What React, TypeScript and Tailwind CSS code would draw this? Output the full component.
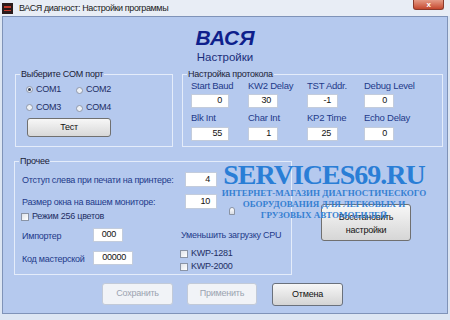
import type { ReactNode } from "react";

function Radio({ checked = false, label }: { checked?: boolean; label: string }) {
    return (
        <div className="flex items-center gap-[3px]">
            <span className="flex h-[7px] w-[7px] items-center justify-center rounded-full border border-[#8f98aa] bg-[#eef1f6]">
                {checked && <span className="h-[3px] w-[3px] rounded-full bg-[#2f3b55]" />}
            </span>
            <span className="text-[#1e2e64]">{label}</span>
        </div>
    );
}

function Check({ label }: { label: string }) {
    return (
        <div className="flex items-center gap-[3px]">
            <span className="h-[8px] w-[8px] border border-[#8a94a6] bg-gradient-to-br from-[#dfe3ea] to-white" />
            <span className="text-[#1e2e64]">{label}</span>
        </div>
    );
}

function Field({ value, w, h = "h-[14px]" }: { value: string; w: string; h?: string }) {
    return (
        <div className={`${w} ${h} flex items-center justify-end border border-[#c3ccdc] bg-white pr-[6px] text-[#111]`}>
            {value}
        </div>
    );
}

function Group({ title, className, children }: { title: string; className: string; children: ReactNode }) {
    return (
        <fieldset className={`box-border border border-[#e4ecfa] ${className}`}>
            <legend className="ml-[4px] px-[1px] leading-[12px] text-[#1b2236]">{title}</legend>
            {children}
        </fieldset>
    );
}

const protocol = [
    ["Start Baud", "0", "w-[38px]"],
    ["KW2 Delay", "30", "w-[30px]"],
    ["TST Addr.", "-1", "w-[31px]"],
    ["Debug Level", "0", "w-[30px]"],
];
const protocol2 = [
    ["Blk Int", "55", "w-[38px]"],
    ["Char Int", "1", "w-[30px]"],
    ["KP2 Time", "25", "w-[31px]"],
    ["Echo Delay", "0", "w-[30px]"],
];

export default function App() {
    return (
        <div className="relative flex h-[320px] w-[450px] flex-col overflow-hidden whitespace-nowrap bg-[#dde6f3] font-['Liberation_Sans',Arial,sans-serif] text-[9px] tracking-[-0.25px]">
            {/* title bar */}
            <div className="flex h-[16px] items-start bg-[#e8edf5]">
                <div className="ml-[2px] mt-[3px] flex h-[11px] w-[11px] items-center justify-center bg-[#2a1a1a]">
                    <div className="h-[5px] w-[7px] border-t-2 border-b border-[#c0392b]" />
                </div>
                <span className="ml-[6px] mt-[2px] text-[9px] leading-[12px] tracking-[-0.4px] text-[#1a1a1a]">ВАСЯ диагност: Настройки программы</span>
                <div className="ml-auto mr-[6px] flex h-[10px] w-[31px] items-center justify-center rounded-b-[3px] border border-t-0 border-[#8a3a2c] bg-gradient-to-b from-[#e49a86] to-[#c4462d] text-[8px] font-bold leading-none text-white">
                    x
                </div>
            </div>

            {/* client area */}
            <div className="mx-[2px] flex h-[298px] flex-col border border-[#7f93b8] bg-[#b5c9ee]">
                <div className="pt-[9px] text-center tracking-normal">
                    <div className="text-[21px] font-bold italic leading-[24px] text-[#0e1f8c]">ВАСЯ</div>
                    <div className="text-[11.5px] leading-[14px] text-[#1a2d7a]">Настройки</div>
                </div>

                <div className="mt-[4px] flex">
                    <Group title="Выберите COM порт" className="ml-[12px] h-[79px] w-[158px]">
                        <div className="pl-[10px] pt-[3px]">
                            <div className="flex h-[14px]">
                                <div className="w-[50px]"><Radio checked label="COM1" /></div>
                                <Radio label="COM2" />
                            </div>
                            <div className="mt-[4px] flex h-[14px]">
                                <div className="w-[50px]"><Radio label="COM3" /></div>
                                <Radio label="COM4" />
                            </div>
                            <button className="ml-[1px] mt-[3px] h-[19px] w-[84px] rounded-[3px] border border-[#707070] bg-gradient-to-b from-[#f7f7f7] to-[#d8d8d8] text-[#111]">
                                Тест
                            </button>
                        </div>
                    </Group>

                    <Group title="Настройка протокола" className="ml-[9px] h-[79px] w-[261px]">
                        <div className="grid grid-cols-[57px_59px_57px_1fr] pl-[8px]">
                            {protocol.map(([label, value, w]) => (
                                <div key={label}>
                                    <div className="text-[9.5px] leading-[11px] text-[#1e3a8a]">{label}</div>
                                    <div className="mt-[3px]"><Field value={value} w={w} /></div>
                                </div>
                            ))}
                            {protocol2.map(([label, value, w]) => (
                                <div key={label} className="mt-[4px]">
                                    <div className="text-[9.5px] leading-[11px] text-[#1e3a8a]">{label}</div>
                                    <div className="mt-[4px]"><Field value={value} w={w} /></div>
                                </div>
                            ))}
                        </div>
                    </Group>
                </div>

                <div className="mt-[8px] flex">
                    <Group title="Прочее" className="ml-[11px] h-[120px] w-[278px]">
                        <div className="pl-[7px] text-[#1e3a8a]">
                            <div className="mt-[5px] flex h-[15px] items-center">
                                <span className="w-[163px] pt-[3px]">Отступ слева при печати на принтере:</span>
                                <Field value="4" w="w-[32px]" h="h-[15px]" />
                            </div>
                            <div className="mt-[7px] flex h-[15px] items-center">
                                <span className="w-[163px] pt-[2px]">Размер окна на вашем мониторе:</span>
                                <Field value="10" w="w-[32px]" h="h-[15px]" />
                            </div>
                            <div className="-ml-[1px] mt-[3px] flex h-[10px] items-center">
                                <Check label="Режим 256 цветов" />
                            </div>
                            <div className="mt-[6px] flex">
                                <div className="w-[159px]">
                                    <div className="flex h-[14px] items-center">
                                        <span className="w-[71px] pt-[3px]">Импортер</span>
                                        <Field value="000" w="w-[30px]" />
                                    </div>
                                    <div className="mt-[9px] flex h-[14px] items-center">
                                        <span className="w-[71px] pt-[4px]">Код мастерской</span>
                                        <Field value="00000" w="w-[40px]" />
                                    </div>
                                </div>
                                <div className="-ml-[1px]">
                                    <div className="pl-[1px] leading-[14px]">Уменьшить загрузку CPU</div>
                                    <div className="mt-[6px] flex h-[12px] items-center"><Check label="KWP-1281" /></div>
                                    <div className="mt-[1px] flex h-[12px] items-center"><Check label="KWP-2000" /></div>
                                </div>
                            </div>
                        </div>
                    </Group>
                    <div className="ml-[29px] mt-[49px]">
                        <button className="h-[37px] w-[90px] rounded-[3px] border border-[#707070] bg-gradient-to-b from-[#f7f7f7] to-[#d6d6d6] pt-[2px] leading-[13px] text-[#111]">
                            Восстановить
                            <br />
                            настройки
                        </button>
                    </div>
                </div>

                <div className="mt-[8px] flex pl-[99px]">
                    <button className="h-[22px] w-[71px] rounded-[3px] border border-[#c2cad8] bg-[#f1f3f7] text-[#9ba3b0]">Сохранить</button>
                    <button className="ml-[14px] h-[22px] w-[70px] rounded-[3px] border border-[#c2cad8] bg-[#f1f3f7] text-[#9ba3b0]">Применить</button>
                    <button className="ml-[15px] h-[23px] w-[71px] rounded-[3px] border border-[#6a717c] bg-gradient-to-b from-[#f7f7f7] to-[#d4d4d4] text-[#111]">Отмена</button>
                </div>
            </div>

            {/* slider thumb */}
            <div className="absolute left-[229px] top-[207px] h-[8px] w-[6px] rounded-t-[3px] border border-[#8a93a3] bg-gradient-to-b from-white to-[#d8dce4]" />

            {/* watermark */}
            <div className="pointer-events-none absolute left-[216px] top-[161px] w-[216px] text-center font-['Liberation_Serif',serif] font-bold tracking-normal">
                <div className="text-[28px] leading-[28px] tracking-[-1px] text-[#2a7ed6]">SERVICES69.RU</div>
                <div className="-mt-[1px] text-[9px] leading-[11px] text-[#3580d2]">
                    ИНТЕРНЕТ-МАГАЗИН ДИАГНОСТИЧЕСКОГО
                    <br />
                    ОБОРУДОВАНИЯ ДЛЯ ЛЕГКОВЫХ И
                    <br />
                    ГРУЗОВЫХ АВТОМОБИЛЕЙ
                </div>
            </div>
        </div>
    );
}
